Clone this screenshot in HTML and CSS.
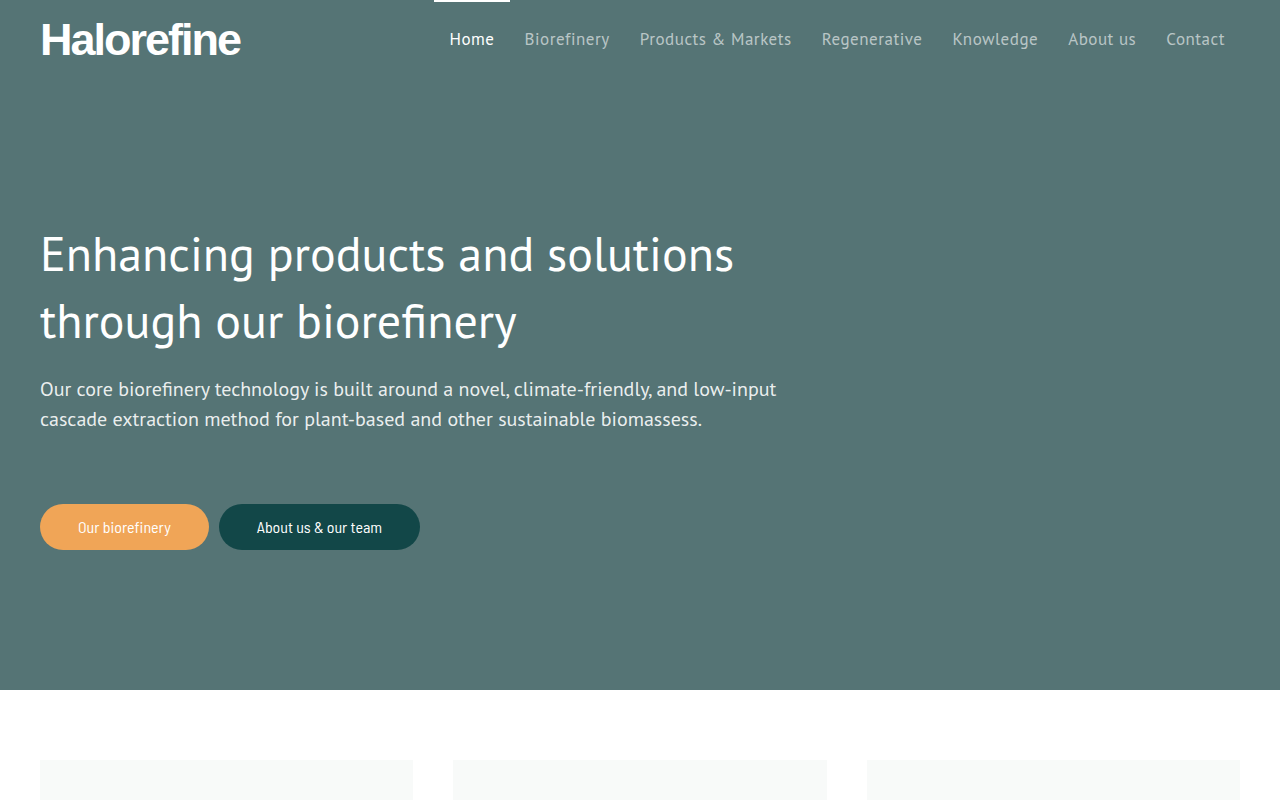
FILE: index.html
```html
<!DOCTYPE html>
<html lang="en">
<head>
  <meta charset="UTF-8">
  <meta name="viewport" content="width=device-width, initial-scale=1.0">
  <title>Halorefine</title>
  <link rel="stylesheet" href="styles.css">
</head>
<body>
  <div class="hero">
    <header class="header container">
      <a href="#" class="logo">Halorefine</a>

      <nav class="menu" aria-label="Main menu">
        <a href="#" class="active" aria-current="page">Home</a>
        <a href="#biorefinery">Biorefinery</a>
        <a href="#products">Products &amp; Markets</a>
        <a href="#regenerative">Regenerative</a>
        <a href="#knowledge">Knowledge</a>
        <a href="#about">About us</a>
        <a href="#contact">Contact</a>
      </nav>
    </header>

    <section class="intro container">
      <h1>Enhancing products and solutions through our biorefinery</h1>
      <p>Our core biorefinery technology is built around a novel, climate-friendly, and low-input cascade extraction method for plant-based and other sustainable biomassess.</p>
      <div class="buttons">
        <a href="#biorefinery" class="btn btn-orange">Our biorefinery</a>
        <a href="#about" class="btn btn-dark">About us &amp; our team</a>
      </div>
    </section>
  </div>

  <main class="cards container">
    <div class="card"></div>
    <div class="card"></div>
    <div class="card"></div>
  </main>
</body>
</html>
```
FILE: styles.css
```css
* {
  box-sizing: border-box;
}

body {
  margin: 0;
  font-family: "PT Sans", "Noto Sans", sans-serif;
  background: #fff;
  color: #fff;
  overflow-x: hidden;
}

a {
  text-decoration: none;
}

.container {
  width: 100%;
  max-width: 1280px;
  margin: 0 auto;
  padding: 0 40px;
}

.hero {
  background: #557475;
}

/* Header */
.header {
  display: flex;
  justify-content: space-between;
  min-height: 80px;
}

.logo {
  align-self: center;
  font-family: "Liberation Sans", sans-serif;
  font-size: 45px;
  font-weight: bold;
  line-height: 80px;
  letter-spacing: -2px;
  color: #fff;
}

.menu {
  display: flex;
}

.menu a {
  padding: 0 15px;
  border-top: 2px solid transparent;
  font-size: 17px;
  line-height: 74px;
  letter-spacing: 0.03em;
  white-space: nowrap;
  color: rgba(255, 255, 255, 0.6);
}

.menu a:hover,
.menu a.active {
  color: #fff;
}

.menu a.active {
  border-top-color: #fff;
}

/* Intro */
.intro {
  padding-top: 140px;
  padding-bottom: 140px;
}

.intro h1 {
  max-width: 800px;
  margin: 0 0 20px;
  font-size: 48px;
  font-weight: 400;
  line-height: 67px;
}

.intro p {
  max-width: 780px;
  margin: 0 0 70px;
  font-size: 20px;
  line-height: 30px;
  color: rgba(255, 255, 255, 0.9);
}

.buttons {
  display: flex;
  flex-wrap: wrap;
  gap: 10px;
}

.btn {
  padding: 0 38px;
  border-radius: 23px;
  font-family: "Barlow Semi Condensed", "Liberation Sans Narrow", Roboto, sans-serif;
  font-size: 16px;
  line-height: 46px;
  color: #fff;
}

.btn-orange {
  background: #f0a557;
}

.btn-dark {
  background: #124748;
}

/* Cards */
.cards {
  display: grid;
  grid-template-columns: repeat(3, 1fr);
  gap: 40px;
  padding-top: 70px;
}

.card {
  min-height: 40px;
  background: #f8faf9;
}

@media screen and (max-width: 900px) {
  .header,
  .menu {
    flex-wrap: wrap;
  }

  .cards {
    grid-template-columns: 1fr;
  }
}
```
